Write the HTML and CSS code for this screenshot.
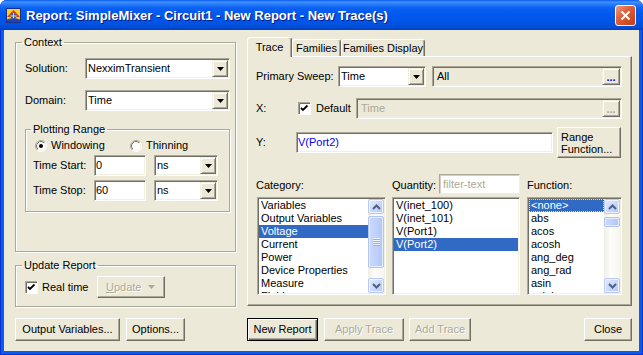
FILE: index.html
```html
<!DOCTYPE html>
<html lang="en">

<head>
  <meta charset="UTF-8"/>
  <title>Report: SimpleMixer - Circuit1 - New Report - New Trace(s)</title>

  <link rel="stylesheet" href="styles.css">
</head>

<body>
<div class="window">
  <div class="titlebar">
    <svg class="app-icon" viewBox="0 0 15 15">
      <rect x="0.5" y="0.5" width="14" height="14" fill="#F6D21C" stroke="#1B2F8E"/>
      <path d="M1 9 L7.5 2 L14 9 Z" fill="#E23A1A"/>
      <circle cx="7.5" cy="8" r="3" fill="#2B5FD9"/>
      <path d="M7.5 5v6M4.5 8h6" stroke="#FFE54A"/>
      <path d="M1 11.5 Q7.5 9 14 11.5 V14 H1Z" fill="#2243B8"/>
    </svg>
    <span class="title">Report: SimpleMixer - Circuit1 - New Report - New Trace(s)</span>
    <span class="close-btn">
      <svg viewBox="0 0 11 11" width="11" height="11"><path d="M1.5 1.5l8 8M9.5 1.5l-8 8" stroke="#fff" stroke-width="2"/></svg>
    </span>
  </div>

  <div class="client">
    <div class="main">
      <!-- left side -->
      <div class="left-col">
        <fieldset class="group context">
          <legend>Context</legend>
          <div class="group-body">
            <div class="row">
              <span class="lbl solution-lbl">Solution:</span>
              <div class="combo wide-combo">
                <span class="combo-text">NexximTransient</span>
                <span class="drop-btn"><svg width="7" height="4" viewBox="0 0 7 4"><path d="M0 0h7L3.5 4z"/></svg></span>
              </div>
            </div>
            <div class="row domain-row">
              <span class="lbl solution-lbl">Domain:</span>
              <div class="combo wide-combo">
                <span class="combo-text">Time</span>
                <span class="drop-btn"><svg width="7" height="4" viewBox="0 0 7 4"><path d="M0 0h7L3.5 4z"/></svg></span>
              </div>
            </div>

            <fieldset class="group plot">
              <legend>Plotting Range</legend>
              <div class="plot-body">
                <div class="radio-row">
                  <label class="radio windowing">
                    <svg width="12" height="12" viewBox="0 0 12 12">
                      <defs>
                        <linearGradient id="ro1" x1="0" y1="0" x2="1" y2="1"><stop offset="0.5" stop-color="#ACA899"/><stop offset="0.5" stop-color="#fff"/></linearGradient>
                        <linearGradient id="ri1" x1="0" y1="0" x2="1" y2="1"><stop offset="0.5" stop-color="#716F64"/><stop offset="0.5" stop-color="#F1EFE2"/></linearGradient>
                      </defs>
                      <circle cx="6" cy="6" r="5.5" fill="#fff" stroke="url(#ro1)"/>
                      <circle cx="6" cy="6" r="4.5" fill="#fff" stroke="url(#ri1)"/>
                      <circle cx="6" cy="6" r="2" fill="#000"/>
                    </svg>
                    Windowing
                  </label>
                  <label class="radio">
                    <svg width="12" height="12" viewBox="0 0 12 12">
                      <defs>
                        <linearGradient id="ro2" x1="0" y1="0" x2="1" y2="1"><stop offset="0.5" stop-color="#ACA899"/><stop offset="0.5" stop-color="#fff"/></linearGradient>
                        <linearGradient id="ri2" x1="0" y1="0" x2="1" y2="1"><stop offset="0.5" stop-color="#716F64"/><stop offset="0.5" stop-color="#F1EFE2"/></linearGradient>
                      </defs>
                      <circle cx="6" cy="6" r="5.5" fill="#fff" stroke="url(#ro2)"/>
                      <circle cx="6" cy="6" r="4.5" fill="#fff" stroke="url(#ri2)"/>
                    </svg>
                    Thinning
                  </label>
                </div>
                <div class="time-row">
                  <span class="lbl time-lbl">Time Start:</span>
                  <div class="edit time-edit">0</div>
                  <div class="combo unit-combo">
                    <span class="combo-text">ns</span>
                    <span class="drop-btn"><svg width="7" height="4" viewBox="0 0 7 4"><path d="M0 0h7L3.5 4z"/></svg></span>
                  </div>
                </div>
                <div class="time-row">
                  <span class="lbl time-lbl">Time Stop:</span>
                  <div class="edit time-edit">60</div>
                  <div class="combo unit-combo">
                    <span class="combo-text">ns</span>
                    <span class="drop-btn"><svg width="7" height="4" viewBox="0 0 7 4"><path d="M0 0h7L3.5 4z"/></svg></span>
                  </div>
                </div>
              </div>
            </fieldset>
          </div>
        </fieldset>

        <fieldset class="group update">
          <legend>Update Report</legend>
          <div class="update-body">
            <label class="check real-time">
              <svg width="13" height="13" viewBox="0 0 13 13">
                <path d="M0 13V0h13" fill="none" stroke="#ACA899" stroke-width="2"/>
                <path d="M0 12.5h12.5V0" fill="none" stroke="#fff"/>
                <rect x="1" y="1" width="11" height="11" fill="#fff"/>
                <path d="M1.5 12V1.5H12" fill="none" stroke="#716F64"/>
                <path d="M3 6l2 2 4.5-4.5" fill="none" stroke="#000" stroke-width="1.8"/>
              </svg>
              Real time
            </label>
            <button class="btn update-btn" disabled>
              <span><u>U</u>pdate</span>
              <svg width="7" height="4" viewBox="0 0 7 4"><path d="M0 0h7L3.5 4z" fill="#ACA899"/></svg>
            </button>
          </div>
        </fieldset>
      </div>

      <!-- right side -->
      <div class="right-col">
        <div class="tabs">
          <span class="tab active trace-tab">Trace</span>
          <span class="tab families-tab">Families</span>
          <span class="tab display-tab">Families Display</span>
        </div>
        <div class="tab-panel">
          <div class="row">
            <span class="lbl sweep-lbl">Primary Sweep:</span>
            <div class="combo sweep-combo">
              <span class="combo-text">Time</span>
              <span class="drop-btn"><svg width="7" height="4" viewBox="0 0 7 4"><path d="M0 0h7L3.5 4z"/></svg></span>
            </div>
            <div class="field readonly all-field">
              <span class="field-text">All</span>
              <span class="dots-btn">...</span>
            </div>
          </div>

          <div class="row x-row">
            <span class="lbl x-lbl">X:</span>
            <label class="check default-check">
              <svg width="13" height="13" viewBox="0 0 13 13">
                <path d="M0 13V0h13" fill="none" stroke="#ACA899" stroke-width="2"/>
                <path d="M0 12.5h12.5V0" fill="none" stroke="#fff"/>
                <rect x="1" y="1" width="11" height="11" fill="#fff"/>
                <path d="M1.5 12V1.5H12" fill="none" stroke="#716F64"/>
                <path d="M3 6l2 2 4.5-4.5" fill="none" stroke="#000" stroke-width="1.8"/>
              </svg>
              Default
            </label>
            <div class="field readonly time-field">
              <span class="field-text disabled-text">Time</span>
              <span class="dots-btn disabled-dots">...</span>
            </div>
          </div>

          <div class="row y-row">
            <span class="lbl y-lbl">Y:</span>
            <div class="edit y-edit">V(Port2)</div>
            <button class="btn range-btn">Range<br>Function...</button>
          </div>

          <div class="lists">
            <div class="list-col cat-col">
              <div class="list-head"><span class="lbl">Category:</span></div>
              <div class="listbox cat-list">
                <div class="list-items">
                  <div class="item">Variables</div>
                  <div class="item">Output Variables</div>
                  <div class="item sel">Voltage</div>
                  <div class="item">Current</div>
                  <div class="item">Power</div>
                  <div class="item">Device Properties</div>
                  <div class="item">Measure</div>
                  <div class="item">Fields</div>
                </div>
                <div class="vscroll">
                  <span class="sb-btn"><svg width="9" height="6" viewBox="0 0 9 6"><path d="M1 5l3.5-3.5L8 5" fill="none" stroke="#4D6185" stroke-width="2"/></svg></span>
                  <span class="sb-thumb cat-thumb"><span class="grip"></span></span>
                  <span class="sb-track"></span>
                  <span class="sb-btn"><svg width="9" height="6" viewBox="0 0 9 6"><path d="M1 1l3.5 3.5L8 1" fill="none" stroke="#4D6185" stroke-width="2"/></svg></span>
                </div>
              </div>
            </div>

            <div class="list-col qty-col">
              <div class="list-head">
                <span class="lbl">Quantity:</span>
                <div class="filter-edit">filter-text</div>
              </div>
              <div class="listbox">
                <div class="list-items">
                  <div class="item">V(inet_100)</div>
                  <div class="item">V(inet_101)</div>
                  <div class="item">V(Port1)</div>
                  <div class="item sel">V(Port2)</div>
                </div>
              </div>
            </div>

            <div class="list-col fn-col">
              <div class="list-head"><span class="lbl">Function:</span></div>
              <div class="listbox">
                <div class="list-items">
                  <div class="item sel focus">&lt;none&gt;</div>
                  <div class="item">abs</div>
                  <div class="item">acos</div>
                  <div class="item">acosh</div>
                  <div class="item">ang_deg</div>
                  <div class="item">ang_rad</div>
                  <div class="item">asin</div>
                  <div class="item">asinh</div>
                </div>
                <div class="vscroll">
                  <span class="sb-btn"><svg width="9" height="6" viewBox="0 0 9 6"><path d="M1 5l3.5-3.5L8 5" fill="none" stroke="#4D6185" stroke-width="2"/></svg></span>
                  <span class="sb-thumb fn-thumb"></span>
                  <span class="sb-track"></span>
                  <span class="sb-btn"><svg width="9" height="6" viewBox="0 0 9 6"><path d="M1 1l3.5 3.5L8 1" fill="none" stroke="#4D6185" stroke-width="2"/></svg></span>
                </div>
              </div>
            </div>
          </div>
        </div>
      </div>
    </div>

    <div class="footer">
      <div class="footer-left">
        <button class="btn outvars-btn">Output Variables...</button>
        <button class="btn options-btn">Options...</button>
      </div>
      <button class="btn btn-default newreport-btn">New Report</button>
      <button class="btn apply-btn" disabled>Apply Trace</button>
      <button class="btn add-btn" disabled>Add Trace</button>
      <button class="btn close-dlg-btn">Close</button>
    </div>
  </div>
</div>
</body>

</html>
```

FILE: styles.css
```css
* {
    box-sizing: border-box;
}

body {
    margin: 0;
    background: #fff;
    font: 11px/13px "Liberation Sans", Arial, sans-serif;
    color: #000;
}

/* window frame */

.window {
    width: 643px;
    height: 355px;
    display: flex;
    flex-direction: column;
    background: #0A5DEB;
    border-radius: 7px 7px 0 0;
    box-shadow: inset 1px 0 #0831D9, inset -1px 0 #0831D9, inset 0 -1px #0831D9;
}

.titlebar {
    height: 30px;
    flex: none;
    display: flex;
    align-items: center;
    padding: 1px 7px 0 6px;
    border-radius: 7px 7px 0 0;
    background: linear-gradient(to bottom, #0A5BEF 0, #3E92FF 2px, #2A7EFA 4px, #0A61F2 8px, #0058EE 14px, #0055E6 22px, #0050DB 26px, #0045C8 29px, #003DBA 30px);
}

.app-icon {
    width: 15px;
    height: 15px;
    flex: none;
}

.title {
    margin-left: 5px;
    color: #fff;
    font: bold 13px/16px "Liberation Sans", Arial, sans-serif;
    text-shadow: 1px 1px #0A1883;
    white-space: nowrap;
}

.close-btn {
    margin-left: auto;
    width: 21px;
    height: 21px;
    display: flex;
    align-items: center;
    justify-content: center;
    border: 1px solid #fff;
    border-radius: 3px;
    background: linear-gradient(135deg, #EE9A80 0, #E0603C 40%, #D04A22 75%, #C23B16 100%);
}

.client {
    flex: 1;
    margin: 0 4px 4px;
    padding: 0 7px 0 11px;
    background: #ECE9D8;
    display: flex;
    flex-direction: column;
}

.main {
    height: 288px;
    flex: none;
    display: flex;
    gap: 11px;
}

.lbl {
    white-space: nowrap;
}

.row {
    display: flex;
    align-items: center;
    height: 21px;
}

/* group boxes */

.group {
    margin: 0;
    padding: 0;
    min-width: 0;
    border: 1px solid #ACA899;
    box-shadow: inset 1px 1px #fff, 1px 1px #fff;
}

.group legend {
    padding: 0 2px;
    margin-left: 6px;
    line-height: 13px;
}

.left-col {
    width: 221px;
    padding-top: 6px;
    display: flex;
    flex-direction: column;
    gap: 7px;
}

.context {
    height: 216px;
}

.group-body {
    padding: 9px 5px 0 9px;
    display: flex;
    flex-direction: column;
}

.solution-lbl {
    width: 60px;
}

.domain-row {
    margin-top: 11px;
}

.plot {
    margin-top: 12px;
    height: 89px;
}

.plot legend {
    margin-left: 5px;
}

.plot-body {
    padding-top: 3px;
}

.radio-row {
    display: flex;
    height: 13px;
    align-items: center;
    margin: 0 0 3px 9px;
}

.radio,
.check {
    display: flex;
    align-items: center;
    gap: 4px;
    white-space: nowrap;
}

.windowing {
    width: 95px;
}

.time-row {
    display: flex;
    align-items: center;
    height: 21px;
    padding-left: 7px;
    margin-bottom: 4px;
}

.time-lbl {
    width: 61px;
}

.time-edit {
    width: 52px;
    margin-right: 8px;
    padding-left: 3px;
}

.unit-combo {
    width: 64px;
    height: 20px;
}

.update {
    height: 48px;
}

.update-body {
    margin-top: 4px;
    padding-left: 9px;
    height: 22px;
    display: flex;
    align-items: center;
}

.real-time {
    width: 72px;
}

/* controls */

.combo,
.edit,
.field,
.listbox {
    display: flex;
    align-items: center;
    height: 21px;
    padding: 1px;
    border: 1px solid;
    border-color: #ACA899 #fff #fff #ACA899;
    box-shadow: inset 1px 1px #716F64, inset -1px -1px #F1EFE2;
    background: #fff;
}

.wide-combo {
    flex: 1;
}

.combo-text,
.field-text {
    flex: 1;
    padding-left: 1px;
    white-space: nowrap;
    overflow: hidden;
}

.drop-btn,
.dots-btn {
    width: 16px;
    align-self: stretch;
    display: flex;
    align-items: center;
    justify-content: center;
    border: 1px solid;
    border-color: #F1EFE2 #716F64 #716F64 #F1EFE2;
    box-shadow: inset 1px 1px #fff, inset -1px -1px #ACA899;
    background: #ECE9D8;
}

.readonly {
    background: #ECE9D8;
}

.field-text {
    padding-left: 3px;
}

.dots-btn {
    width: 18px;
    align-items: flex-end;
    padding-bottom: 2px;
    color: #0000EE;
    font-weight: bold;
    line-height: 9px;
}

.disabled-dots {
    color: #ACA899;
}

.disabled-text {
    color: #ACA899;
}

.btn {
    height: 23px;
    padding: 0;
    font: inherit;
    color: #000;
    background: #ECE9D8;
    border: 1px solid;
    border-color: #fff #716F64 #716F64 #fff;
    box-shadow: inset -1px -1px #ACA899;
    white-space: nowrap;
}

.btn:disabled {
    color: #ACA899;
    text-shadow: 1px 1px #fff;
}

.btn-default {
    border: 1px solid #000;
    box-shadow: inset 1px 1px #fff, inset -1px -1px #716F64, inset -2px -2px #ACA899;
}

.update-btn {
    width: 68px;
    height: 22px;
    display: flex;
    align-items: center;
    justify-content: space-between;
    padding: 0 9px 0 8px;
}

/* tabs */

.right-col {
    width: 385px;
    padding-top: 7px;
    display: flex;
    flex-direction: column;
}

.tabs {
    display: flex;
    align-items: flex-end;
    height: 19px;
}

.tab {
    height: 17px;
    padding-top: 2px;
    text-align: center;
    white-space: nowrap;
    border-top: 1px solid #fff;
    border-left: 1px solid #fff;
    border-right: 1px solid #716F64;
    border-radius: 3px 3px 0 0;
    box-shadow: inset -1px 0 #ACA899;
    background: #ECE9D8;
}

.tab.active {
    height: 20px;
    margin-bottom: -1px;
    padding-top: 3px;
    position: relative;
    z-index: 1;
}

.trace-tab {
    width: 45px;
}

.families-tab {
    width: 49px;
}

.display-tab {
    width: 84px;
}

.tab-panel {
    height: 250px;
    padding: 9px 0 0 8px;
    border: 1px solid;
    border-color: #fff #716F64 #716F64 #fff;
    box-shadow: inset -1px -1px #ACA899;
}

.sweep-lbl {
    width: 82px;
}

.sweep-combo {
    width: 88px;
}

.all-field {
    width: 190px;
    margin-left: 6px;
}

.x-row {
    margin-top: 11px;
}

.x-lbl {
    width: 42px;
}

.default-check {
    width: 58px;
    gap: 5px;
}

.time-field {
    width: 266px;
}

.y-row {
    margin-top: 8px;
    height: 31px;
}

.y-lbl {
    width: 40px;
}

.y-edit {
    width: 257px;
    color: #0000EE;
}

.range-btn {
    width: 64px;
    height: 31px;
    margin-left: 4px;
    padding-left: 3px;
    text-align: left;
    line-height: 12px;
}

/* lists */

.lists {
    display: flex;
    gap: 6px;
    margin-top: 16px;
}

.list-col {
    display: flex;
    flex-direction: column;
}

.cat-col {
    width: 130px;
}

.cat-list {
    margin-left: 1px;
}

.qty-col {
    width: 128px;
}

.fn-col {
    width: 95px;
    margin-left: 1px;
}

.list-head {
    height: 20px;
    display: flex;
    align-items: center;
    padding-top: 2px;
}

.filter-edit {
    width: 82px;
    height: 20px;
    margin-left: 3px;
    margin-top: -2px;
    padding: 3px 0 0 3px;
    color: #ACA899;
    background: #fff;
    border: 1px solid;
    border-color: #ACA899 #F1EFE2 #F1EFE2 #ACA899;
    box-shadow: inset 1px 1px #D4D0C8;
}

.listbox {
    height: 98px;
    margin-top: 3px;
    align-items: stretch;
    overflow: hidden;
}

.list-items {
    flex: 1;
    min-width: 0;
    overflow: hidden;
}

.item {
    height: 13px;
    padding-left: 2px;
    white-space: nowrap;
}

.item.sel {
    background: #316AC5;
    color: #fff;
}

.item.focus {
    outline: 1px dotted #F5DB95;
    outline-offset: -1px;
}

.vscroll {
    width: 16px;
    flex: none;
    display: flex;
    flex-direction: column;
    background: linear-gradient(to right, #EEEDE5, #FDFDFA 40%, #F6F5EF);
}

.sb-btn {
    height: 15px;
    flex: none;
    display: flex;
    align-items: center;
    justify-content: center;
    border: 1px solid #B7CAF5;
    border-radius: 2px;
    background: linear-gradient(135deg, #E4ECFE 0, #C9D8FC 50%, #B4C9F6 100%);
    box-shadow: inset 0 0 0 1px #EEF3FE;
}

.sb-thumb {
    flex: none;
    margin-top: 2px;
    display: flex;
    align-items: center;
    justify-content: center;
    border: 1px solid #B1C6F4;
    border-radius: 2px;
    background: linear-gradient(to right, #CBD9FC, #BFD0FA 50%, #B2C7F6);
    box-shadow: inset 0 0 0 1px #E3EBFE;
}

.cat-thumb {
    height: 52px;
}

.fn-thumb {
    height: 10px;
    margin-top: 3px;
}

.grip {
    width: 7px;
    height: 8px;
    background: repeating-linear-gradient(to bottom, #EEF4FE 0 1px, #8CB0F8 1px 2px);
}

.sb-track {
    flex: 1;
}

/* bottom buttons */

.footer {
    display: flex;
    height: 23px;
}

.footer-left {
    width: 232px;
    display: flex;
    gap: 6px;
}

.outvars-btn {
    width: 105px;
}

.options-btn {
    width: 59px;
}

.newreport-btn {
    width: 71px;
    margin-right: 6px;
}

.apply-btn {
    width: 80px;
    margin-right: 5px;
}

.add-btn {
    width: 62px;
}

.close-dlg-btn {
    width: 48px;
    margin-left: auto;
}
```
